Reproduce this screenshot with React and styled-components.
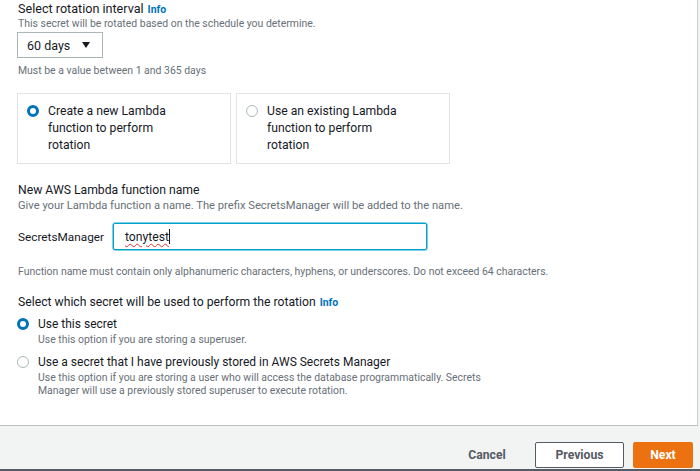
import React from "react";
import styled, { createGlobalStyle } from "styled-components";

const Global = createGlobalStyle`
  html, body { margin: 0; padding: 0; background: #ffffff; }
  body { font-family: Roboto, "Liberation Sans", Arial, sans-serif; color: #16191f; }
  #root { height: 471px; overflow: hidden; }
`;

const Page = styled.div`
  height: 471px;
  display: flex;
  flex-direction: column;
  background: #f2f3f3;
`;

const Panel = styled.div`
  height: 426px;
  box-sizing: border-box;
  background: #ffffff;
  border-right: 1px solid #c9cfcf;
  border-bottom: 1px solid #b8c0c0;
  margin-right: 2px;
  padding: 1px 0 0 18px;
  display: flex;
  flex-direction: column;
`;

const Label = styled.div`
  font-size: ${(p) => p.$size || 12.2}px;
  line-height: 15px;
  color: #16191f;
  display: flex;
  align-items: baseline;
  gap: 4px;
  margin-top: ${(p) => p.$mt || 0}px;
`;

const Info = styled.span`
  font-size: 10.5px;
  font-weight: 700;
  color: #0073bb;
`;

const Hint = styled.div`
  font-size: ${(p) => p.$size || 10.45}px;
  line-height: 13px;
  color: #687078;
  margin-top: ${(p) => p.$mt || 0}px;
  max-width: ${(p) => p.$max || "none"};
`;

const SelectBox = styled.div`
  width: 86px;
  height: 26px;
  box-sizing: border-box;
  margin-left: -1px;
  margin-top: 2px;
  border: 1px solid #aab7b8;
  display: flex;
  align-items: center;
  padding: 0 0 0 9px;
  font-size: 12.5px;
  gap: 12px;
`;

const Caret = styled.span`
  width: 0;
  height: 0;
  border-left: 4.5px solid transparent;
  border-right: 4.5px solid transparent;
  border-top: 6px solid #16191f;
`;

const Tiles = styled.div`
  display: flex;
  gap: 5px;
  margin-left: -1px;
  margin-top: 16px;
`;

const Tile = styled.div`
  width: 214px;
  height: 71px;
  box-sizing: border-box;
  border: 1px solid #e1e4e4;
  display: flex;
  align-items: flex-start;
  gap: 9px;
  padding: 11px 0 0 9px;
`;

const TileText = styled.div`
  font-size: 12.2px;
  line-height: 17px;
  width: 138px;
  margin-top: -2px;
`;

const Radio = styled.span`
  flex: none;
  width: 12px;
  height: 12px;
  box-sizing: border-box;
  border-radius: 50%;
  margin-top: ${(p) => p.$mt || 0}px;
  border: ${(p) => (p.$on ? "3.5px solid #0073bb" : "1px solid #aab7b8")};
  background: #ffffff;
`;

const NameRow = styled.div`
  display: flex;
  align-items: center;
  margin-top: 11px;
  font-size: 11.8px;
`;

const Prefix = styled.span`
  width: 95px;
`;

const Input = styled.div`
  width: 314px;
  height: 27px;
  box-sizing: border-box;
  border: 1px solid #00a1c9;
  box-shadow: 0 0 0 0.5px #00a1c9;
  border-radius: 2px;
  display: flex;
  align-items: center;
  padding-left: 11px;
  font-size: 12.2px;
`;

const Typed = styled.span`
  text-decoration: underline wavy #e0312f;
  text-decoration-thickness: 1px;
  text-underline-offset: 2px;
`;

const TextCursor = styled.span`
  width: 1px;
  height: 15px;
  background: #16191f;
`;

const Option = styled.div`
  display: flex;
  align-items: flex-start;
  gap: 9px;
  margin-left: -1px;
  margin-top: ${(p) => p.$mt || 0}px;
`;

const OptionBody = styled.div`
  display: flex;
  flex-direction: column;
`;

const OptionTitle = styled.div`
  font-size: 12px;
  line-height: 15px;
`;

const Footer = styled.div`
  flex: 1;
  display: flex;
  justify-content: flex-end;
  align-items: flex-end;
  gap: 9px;
  padding: 0 7px 1px 0;
  border-bottom: 2px solid #545b64;
`;

const Button = styled.button`
  font-family: Roboto, "Liberation Sans", Arial, sans-serif;
  font-size: 12.2px;
  font-weight: 700;
  height: 26px;
  box-sizing: border-box;
  border-radius: 2px;
  cursor: pointer;
  padding: 0;
  width: ${(p) => p.$w}px;
  color: ${(p) => (p.$variant === "primary" ? "#ffffff" : "#545b64")};
  background: ${(p) => (p.$variant === "primary" ? "#ec7211" : p.$variant === "link" ? "transparent" : "#ffffff")};
  border: 1px solid ${(p) => (p.$variant === "primary" ? "#ec7211" : p.$variant === "link" ? "transparent" : "#545b64")};
  margin-right: ${(p) => p.$mr || 0}px;
`;

export default function App() {
  return (
    <>
      <Global />
      <Page>
        <Panel>
          <Label $size={12.6}>
            Select rotation interval <Info>Info</Info>
          </Label>
          <Hint>This secret will be rotated based on the schedule you determine.</Hint>
          <SelectBox>
            60 days <Caret />
          </SelectBox>
          <Hint $mt={6}>Must be a value between 1 and 365 days</Hint>
          <Tiles>
            <Tile>
              <Radio $on />
              <TileText>Create a new Lambda function to perform rotation</TileText>
            </Tile>
            <Tile>
              <Radio />
              <TileText>Use an existing Lambda function to perform rotation</TileText>
            </Tile>
          </Tiles>
          <Label $mt={19}>New AWS Lambda function name</Label>
          <Hint $mt={1} $size={11.2}>
            Give your Lambda function a name. The prefix SecretsManager will be added to the name.
          </Hint>
          <NameRow>
            <Prefix>SecretsManager</Prefix>
            <Input>
              <Typed>tonytest</Typed>
              <TextCursor />
            </Input>
          </NameRow>
          <Hint $mt={15}>
            Function name must contain only alphanumeric characters, hyphens, or underscores. Do not exceed 64 characters.
          </Hint>
          <Label $mt={17}>
            Select which secret will be used to perform the rotation <Info>Info</Info>
          </Label>
          <Option $mt={7}>
            <Radio $on $mt={1} />
            <OptionBody>
              <OptionTitle>Use this secret</OptionTitle>
              <Hint $mt={1}>Use this option if you are storing a superuser.</Hint>
            </OptionBody>
          </Option>
          <Option $mt={9}>
            <Radio $mt={1} />
            <OptionBody>
              <OptionTitle>Use a secret that I have previously stored in AWS Secrets Manager</OptionTitle>
              <Hint $mt={1} $max="450px">
                Use this option if you are storing a user who will access the database programmatically. Secrets Manager
                will use a previously stored superuser to execute rotation.
              </Hint>
            </OptionBody>
          </Option>
        </Panel>
        <Footer>
          <Button $variant="link" $w={60} $mr={9}>Cancel</Button>
          <Button $w={89}>Previous</Button>
          <Button $variant="primary" $w={60}>Next</Button>
        </Footer>
      </Page>
    </>
  );
}
